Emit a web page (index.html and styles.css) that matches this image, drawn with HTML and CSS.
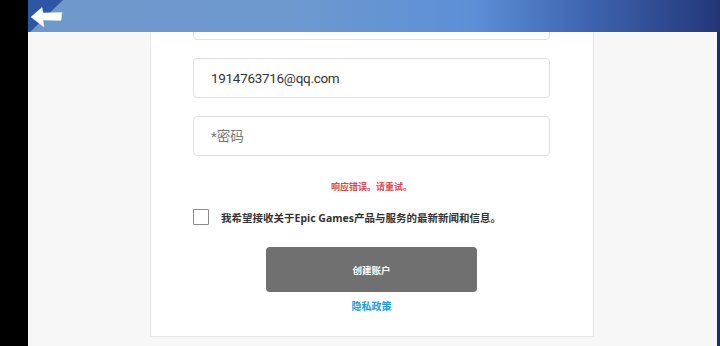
FILE: index.html
```html
<!DOCTYPE html>
<html lang="zh">

<head>
    <meta charset="UTF-8">
    <meta name="viewport" content="width=device-width, initial-scale=1.0">
    <title>创建账户</title>
    <link rel="stylesheet" href="styles.css">
</head>

<body>
    <div class="screen">
        <div class="bezel"></div>
        <div class="app">
            <div class="header">
                <svg class="back" width="40" height="32" viewBox="0 0 40 32">
                    <polygon points="0,0 35,0 0,34" fill="#2d56a4" />
                    <polygon points="3,17 14,7.5 15,13 34,12.5 33,20.5 15,20 16,27" fill="#fff" stroke="#dfe6f2" stroke-width="0.6" />
                </svg>
            </div>
            <div class="body">
                <div class="page">
                    <div class="card">
                        <div class="field field-top"></div>
                        <div class="field">1914763716@qq.com</div>
                        <div class="field placeholder">*密码</div>
                        <div class="error">响应错误。请重试。</div>
                        <label class="check">
                            <span class="box"></span>
                            <span>我希望接收关于Epic Games产品与服务的最新新闻和信息。</span>
                        </label>
                        <div class="actions">
                            <button class="primary">创建账户</button>
                            <a class="link" href="#">隐私政策</a>
                        </div>
                    </div>
                </div>
                <div class="edge"></div>
            </div>
        </div>
    </div>
</body>

</html>
```

FILE: styles.css
```css
* {
    padding: 0;
    margin: 0;
    box-sizing: border-box;
}

html,
body {
    width: 100%;
    height: 100%;
    overflow: hidden;
    font-family: "Noto Sans", "Noto Sans CJK SC", sans-serif;
}

.screen {
    height: 100%;
    display: flex;
}

.bezel {
    width: 28px;
    background-color: #000;
}

.app {
    flex: 1;
    display: flex;
    flex-direction: column;
}

.app .header {
    height: 32px;
    display: flex;
    background: linear-gradient(90deg, #7098cb 0%, #6d99cf 38%, #5d8fd8 64%, #3d62ad 82%, #233678 100%);
}

.header .back {
    display: block;
}

.app .body {
    flex: 1;
    display: flex;
}

.body .page {
    flex: 1;
    background-color: #f7f7f7;
    padding-left: 122px;
}

.body .edge {
    width: 3px;
    background-color: #1d2e6d;
}

.page .card {
    width: 444px;
    height: 305px;
    background-color: #fff;
    border: 1px solid #e6e6e6;
    border-top: none;
    overflow: hidden;
    padding: 0 43px 0 42px;
}

.card .field {
    height: 40px;
    border: 1px solid #e1e1e1;
    border-radius: 4px;
    margin-top: 18px;
    padding-left: 17px;
    font-family: Roboto, "Noto Sans CJK SC", sans-serif;
    font-size: 13.5px;
    letter-spacing: -0.3px;
    line-height: 38px;
    color: #333;
}

.card .field-top {
    margin-top: -32px;
}

.card .placeholder {
    color: #777;
    letter-spacing: 0;
}

.card .error {
    margin-top: 24px;
    text-align: center;
    font-size: 9px;
    font-weight: 700;
    color: #e0474a;
}

.card .check {
    display: flex;
    align-items: center;
    margin-top: 16px;
    font-size: 10.5px;
    color: #333;
    font-weight: 700;
}

.check .box {
    width: 16px;
    height: 16px;
    border: 1px solid #8a8a8a;
    border-radius: 1px;
    margin-right: 12px;
}

.card .actions {
    display: flex;
    flex-direction: column;
    align-items: center;
    margin-top: 22px;
}

.actions button.primary {
    width: 211px;
    height: 45px;
    border: none;
    border-radius: 4px;
    background-color: #707070;
    color: #fff;
    font-family: inherit;
    font-size: 9.5px;
    font-weight: 700;
}

.actions .link {
    margin-top: 6px;
    font-size: 10px;
    font-weight: 700;
    color: #1a9be0;
    text-decoration: none;
}

button:focus,
button:active {
    outline: none;
}
```
